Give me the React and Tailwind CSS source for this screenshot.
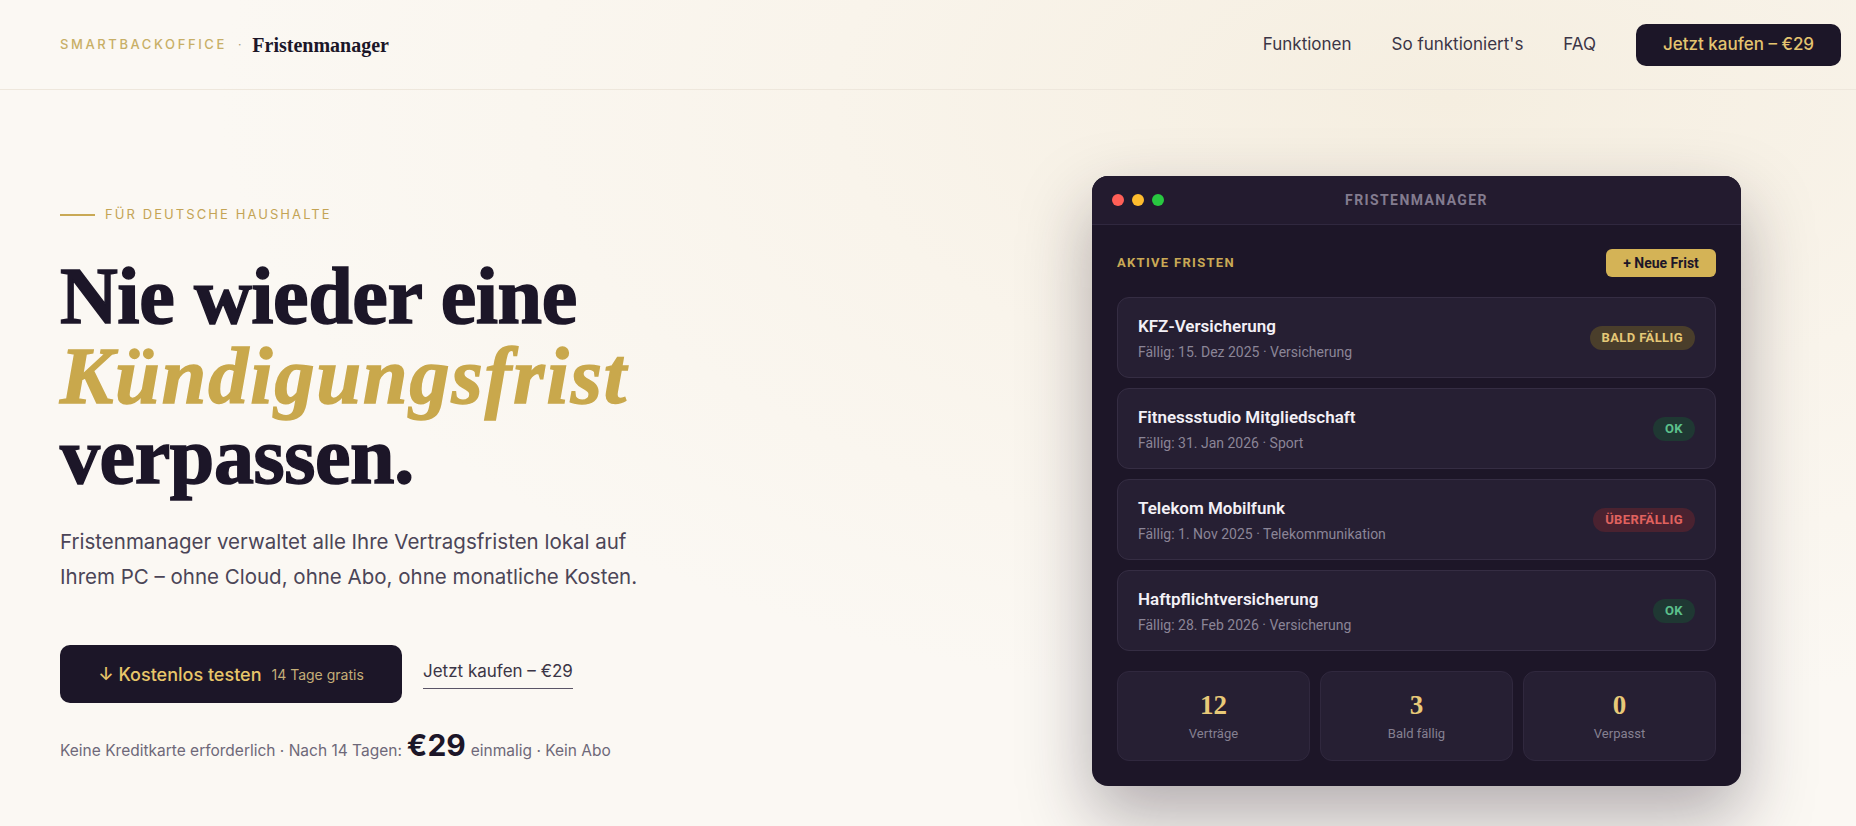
const fristen = [
  { title: 'KFZ-Versicherung', meta: 'Fällig: 15. Dez 2025 · Versicherung', status: 'soon' },
  { title: 'Fitnessstudio Mitgliedschaft', meta: 'Fällig: 31. Jan 2026 · Sport', status: 'ok' },
  { title: 'Telekom Mobilfunk', meta: 'Fällig: 1. Nov 2025 · Telekommunikation', status: 'late' },
  { title: 'Haftpflichtversicherung', meta: 'Fällig: 28. Feb 2026 · Versicherung', status: 'ok' },
]

const stats = [
  { value: '12', label: 'Verträge' },
  { value: '3', label: 'Bald fällig' },
  { value: '0', label: 'Verpasst' },
]

const StatusBadge = ({ status }) => {
  if (status === 'soon') {
    return (
      <span className="h-[24px] px-[12px] rounded-full bg-[#4a3e2b] text-[#e4c877] text-[13px] font-bold tracking-[0.03em] flex items-center">
        BALD FÄLLIG
      </span>
    )
  }
  if (status === 'late') {
    return (
      <span className="h-[24px] px-[12px] rounded-full bg-[#4a2230] text-[#e0625f] text-[13px] font-bold tracking-[0.03em] flex items-center">
        ÜBERFÄLLIG
      </span>
    )
  }
  return (
    <span className="h-[24px] px-[12px] rounded-full bg-[#1f3833] text-[#5cc08c] text-[13px] font-bold tracking-[0.03em] flex items-center">
      OK
    </span>
  )
}

const AppWindow = () => (
  <div className="w-[649px] h-[610px] shrink-0 rounded-[16px] bg-[#1d1628] overflow-hidden shadow-[0_30px_70px_rgba(40,30,45,0.35)] font-['Roboto',sans-serif]">
    {/* title bar */}
    <div className="h-[49px] grid grid-cols-[1fr_auto_1fr] items-center px-[20px] bg-[#231b2f] border-b border-[#30283f]">
      <div className="flex items-center gap-[8px]">
        <span className="w-[12px] h-[12px] rounded-full bg-[#ff5f57]" />
        <span className="w-[12px] h-[12px] rounded-full bg-[#febc2e]" />
        <span className="w-[12px] h-[12px] rounded-full bg-[#28c840]" />
      </div>
      <span className="text-[14px] font-bold tracking-[0.1em] text-[#837c8f]">FRISTENMANAGER</span>
      <div />
    </div>

    <div className="px-[25px] pt-[24px]">
      <div className="h-[28px] flex items-center justify-between">
        <span className="text-[13px] font-bold tracking-[0.1em] text-[#c9a955]">AKTIVE FRISTEN</span>
        <button className="h-[28px] w-[110px] rounded-[6px] bg-[#d4b356] text-[#1d1628] text-[14px] font-bold">
          + Neue Frist
        </button>
      </div>

      <div className="mt-[20px] flex flex-col gap-[10px]">
        {fristen.map((f) => (
          <div
            key={f.title}
            className="h-[81px] px-[20px] flex items-center justify-between rounded-[12px] bg-[#261f33] border border-[#352d43]"
          >
            <div>
              <p className="text-[17px] leading-[22px] font-semibold text-[#f3f0f6]">{f.title}</p>
              <p className="mt-[6px] text-[14px] leading-[18px] text-[#8b8597]">{f.meta}</p>
            </div>
            <StatusBadge status={f.status} />
          </div>
        ))}
      </div>

      <div className="mt-[20px] grid grid-cols-3 gap-[10px]">
        {stats.map((s) => (
          <div
            key={s.label}
            className="h-[90px] flex flex-col items-center justify-center rounded-[12px] bg-[#261f33] border border-[#30283e]"
          >
            <span className="font-['Liberation_Serif',serif] text-[27px] leading-[30px] font-bold text-[#e8c978]">
              {s.value}
            </span>
            <span className="mt-[6px] text-[13px] leading-[16px] text-[#858091]">{s.label}</span>
          </div>
        ))}
      </div>
    </div>
  </div>
)

export default function App() {
  return (
    <div className="min-h-screen overflow-hidden font-['Inter',sans-serif] bg-[#fbf8f3] bg-[radial-gradient(ellipse_at_78%_12%,#f5eee0_0%,#f9f4eb_30%,#fbf8f3_60%)]">
      {/* Header */}
      <header className="h-[90px] flex items-center justify-between pl-[60px] pr-[15px] border-b border-[#eee7dc]">
        <div className="flex items-center">
          <span className="text-[13px] font-medium tracking-[0.2em] text-[#c8af66]">SMARTBACKOFFICE</span>
          <span className="mx-[11px] text-[12px] text-[#a99b7a]">·</span>
          <span className="font-['Liberation_Serif',serif] text-[20px] font-semibold text-[#1c1628]">
            Fristenmanager
          </span>
        </div>
        <nav className="flex items-center gap-[40px]">
          <a className="text-[17px] text-[#3b3546]">Funktionen</a>
          <a className="text-[17px] text-[#3b3546]">So funktioniert's</a>
          <a className="text-[17px] text-[#3b3546]">FAQ</a>
          <button className="h-[42px] w-[205px] rounded-[10px] bg-[#1c1628] text-[#e4c470] text-[17px] font-medium">
            Jetzt kaufen – €29
          </button>
        </nav>
      </header>

      {/* Hero */}
      <main className="flex items-start justify-between pl-[60px] pr-[115px] pt-[86px]">
        <div className="pt-[29px]">
          <div className="flex items-center gap-[10px] h-[20px]">
            <span className="w-[35px] h-[2px] bg-[#c9a955]" />
            <span className="text-[13px] tracking-[0.16em] text-[#c4a455]">FÜR DEUTSCHE HAUSHALTE</span>
          </div>

          <h1 className="mt-[31px] font-['Liberation_Serif',serif] text-[80px] leading-[80px] font-bold tracking-[-0.005em] text-[#1c1628] [-webkit-text-stroke:1.5px_#1c1628]">
            Nie wieder eine
            <br />
            <em className="tracking-[0.025em] text-[#c9a84c] [-webkit-text-stroke:1.5px_#c9a84c]">Kündigungsfrist</em>
            <br />
            verpassen.
          </h1>

          <p className="mt-[28px] text-[20.5px] leading-[35px] text-[#4b4557]">
            Fristenmanager verwaltet alle Ihre Vertragsfristen lokal auf
            <br />
            Ihrem PC – ohne Cloud, ohne Abo, ohne monatliche Kosten.
          </p>

          <div className="mt-[51px] flex items-center gap-[21px]">
            <button className="h-[58px] w-[342px] rounded-[10px] bg-[#1c1628] flex items-center justify-center gap-[10px]">
              <span className="text-[18px] font-medium text-[#e8c66a]">↓ Kostenlos testen</span>
              <span className="text-[14px] text-[#c5ae78]">14 Tage gratis</span>
            </button>
            <a className="text-[17px] text-[#3b3546] pb-[3px] border-b border-[#5a5466]">Jetzt kaufen – €29</a>
          </div>

          <p className="mt-[24px] flex items-baseline gap-[5px] text-[15.5px] text-[#6e6879]">
            <span>Keine Kreditkarte erforderlich · Nach 14 Tagen:</span>
            <span className="text-[30px] leading-[36px] font-bold text-[#1c1628]">€29</span>
            <span>einmalig · Kein Abo</span>
          </p>
        </div>

        <AppWindow />
      </main>
    </div>
  )
}
